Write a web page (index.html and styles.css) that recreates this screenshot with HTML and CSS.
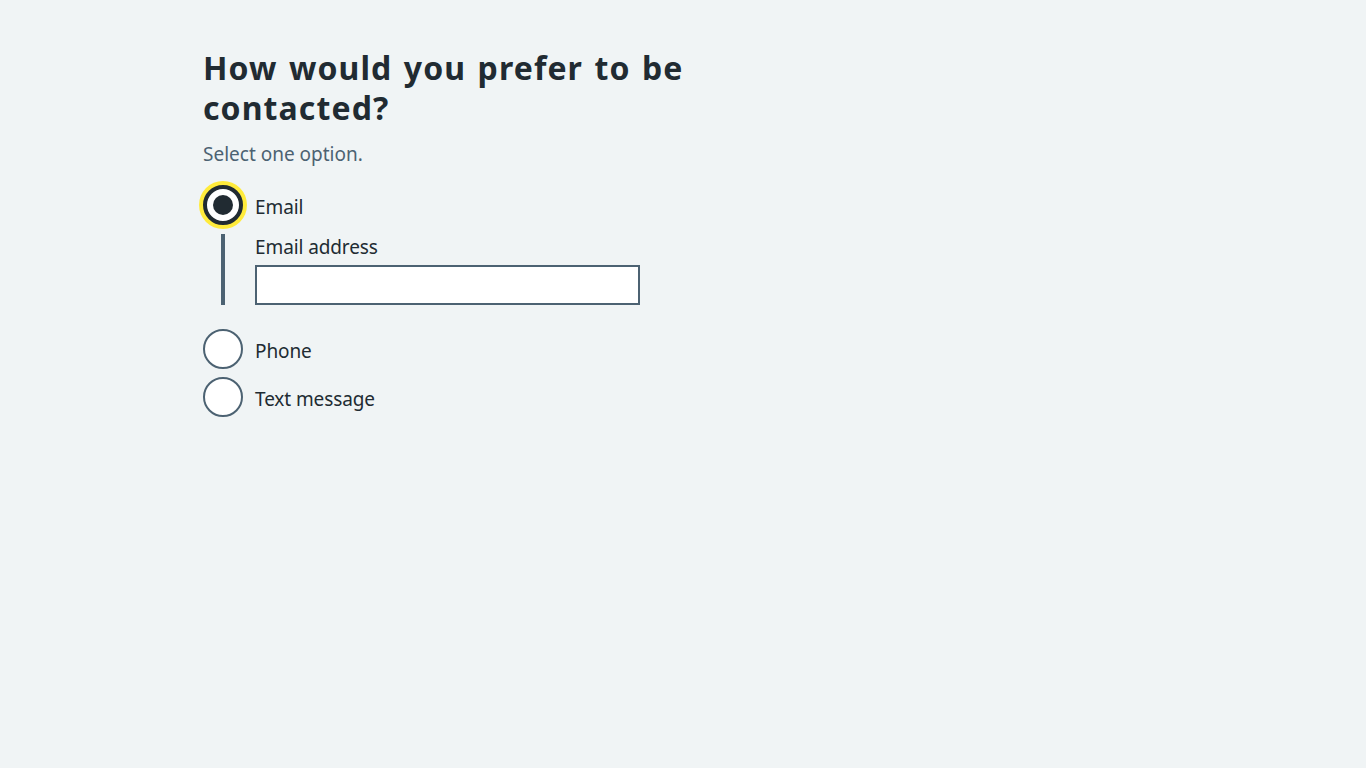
FILE: index.html
```html
<!DOCTYPE html>
<html lang="en">
<head>
<meta charset="utf-8">
<title>How would you prefer to be contacted?</title>
<link rel="stylesheet" href="styles.css">
</head>
<body>
<main class="container">
  <fieldset class="fieldset">
    <legend class="legend"><h1 class="heading">How would you prefer to be contacted?</h1></legend>
    <div class="hint">Select one option.</div>
    <div class="radios">
      <label class="radio-item">
        <span class="radio radio--checked radio--focus"><span class="dot"></span></span>
        <span class="radio-label">Email</span>
      </label>
      <div class="conditional">
        <label class="field-label" for="email">Email address</label>
        <input class="input" id="email" type="text">
      </div>
      <label class="radio-item radio-item--spaced">
        <span class="radio"></span>
        <span class="radio-label">Phone</span>
      </label>
      <label class="radio-item">
        <span class="radio"></span>
        <span class="radio-label">Text message</span>
      </label>
    </div>
  </fieldset>
</main>
</body>
</html>
```
FILE: styles.css
```css
html, body {
  margin: 0;
  padding: 0;
  background: #f0f4f5;
  color: #212b32;
  font-family: "Noto Sans", "Open Sans", Arial, sans-serif;
}
.container {
  max-width: 960px;
  margin: 0 auto;
  padding-top: 48px;
}
.fieldset {
  border: 0;
  margin: 0;
  padding: 0;
}
.legend {
  padding: 0;
}
.heading {
  font-size: 32px;
  line-height: 40px;
  font-weight: 700;
  letter-spacing: 1.1px;
  word-spacing: 2px;
  margin: 0 0 12px;
  max-width: 520px;
}
.hint {
  font-size: 19px;
  line-height: 28px;
  color: #4c6272;
  margin-bottom: 17px;
}
.radios {
  display: flex;
  flex-direction: column;
}
.radio-item {
  display: flex;
  align-items: center;
  gap: 12px;
  margin-bottom: 8px;
}
.radio-item--spaced {
  margin-top: 24px;
}
.radio {
  box-sizing: border-box;
  width: 40px;
  height: 40px;
  border-radius: 50%;
  border: 2px solid #4c6272;
  background: #ffffff;
  display: flex;
  align-items: center;
  justify-content: center;
  flex: none;
}
.radio--checked {
  border: 4px solid #212b32;
}
.radio--focus {
  box-shadow: 0 0 0 4px #ffeb3b;
}
.dot {
  width: 20px;
  height: 20px;
  border-radius: 50%;
  background: #212b32;
}
.radio-label {
  font-size: 19px;
  line-height: 28px;
  padding-top: 3px;
  letter-spacing: -0.1px;
}
.conditional {
  margin: 1px 0 0 18px;
  border-left: 4px solid #4c6272;
  padding: 0 0 0 30px;
  display: flex;
  flex-direction: column;
  align-items: flex-start;
}
.field-label {
  font-size: 19px;
  line-height: 28px;
  margin-top: -1px;
  margin-bottom: 4px;
  letter-spacing: -0.1px;
}
.input {
  box-sizing: border-box;
  width: 385px;
  height: 40px;
  border: 2px solid #4c6272;
  background: #ffffff;
  margin: 0;
  padding: 4px;
  font: inherit;
  font-size: 19px;
  border-radius: 0;
}
```
